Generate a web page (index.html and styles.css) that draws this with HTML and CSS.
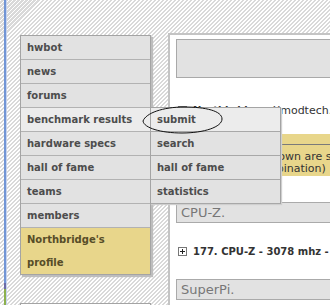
FILE: index.html
```html
<!DOCTYPE html>
<html lang="en">
<head>
<meta charset="UTF-8" />
<title>hwbot - Northbridge</title>
<link rel="stylesheet" href="styles.css">
</head>
<body>
<div class="page">
  <div class="edge"></div>

  <!-- left menu -->
  <div class="side">
    <ul class="menu">
      <li>hwbot</li>
      <li>news</li>
      <li>forums</li>
      <li class="open">benchmark results
        <ul class="submenu">
          <li class="hover">submit</li>
          <li>search</li>
          <li>hall of fame</li>
          <li>statistics</li>
        </ul>
      </li>
      <li>hardware specs</li>
      <li>hall of fame</li>
      <li>teams</li>
      <li>members</li>
      <li class="profile">Northbridge's<br>profile</li>
    </ul>
    <div class="sidebox"></div>
  </div>

  <!-- content -->
  <div class="content">
    <div class="panel-head"></div>
    <div class="row">
      <svg class="plus" width="9" height="9" viewBox="0 0 9 9"><rect x="0.5" y="0.5" width="8" height="8" fill="#fff" stroke="#777"/><path d="M2 4.5h5M4.5 2v5" stroke="#222"/></svg>
      <span><b>Northbridge</b> - Xmodtech.be</span>
    </div>
    <div class="notice">
      <div class="notice-top"></div>
      <div class="notice-text">Only the results shown are sorted by points<br>(for hardware combination)</div>
    </div>
    <div class="sect">CPU-Z.</div>
    <div class="row">
      <svg class="plus" width="9" height="9" viewBox="0 0 9 9"><rect x="0.5" y="0.5" width="8" height="8" fill="#fff" stroke="#777"/><path d="M2 4.5h5M4.5 2v5" stroke="#222"/></svg>
      <span><b>177. CPU-Z - 3078 mhz - Northbridge</b></span>
    </div>
    <div class="sect">SuperPi.</div>
  </div>
</div>

<svg class="mark" width="330" height="305" viewBox="0 0 330 305">
  <path d="M143,121 C146,113 163,107 184,107 C206,107 222,111 222,119 C222,127 204,133 182,133 C161,133 144,128 143,121 Z" fill="none" stroke="#111" stroke-width="1"/>
</svg>
</body>
</html>
```

FILE: styles.css
```css
html, body {
  margin:0; padding:0;
  height:305px;
  overflow:hidden;
}
body {
  font-family: 'DejaVu Sans', Verdana, sans-serif;
  background: repeating-linear-gradient(135deg, #ffffff 0 1.4px, #d9d9d9 1.4px 2.83px);
  color:#333;
  position:relative;
}
.page {
  display:flex;
  height:305px;
}
.edge {
  flex-shrink:0;
  margin-left:4px;
  width:2px;
  border-right:1px solid #c6d3ee;
  background: linear-gradient(#7195d5 0 283px, #6b6aa6 283px 289px, #8cb04c 289px);
}

/* left menu */
.side {
  margin-left:13px;
  width:131px;
  flex-shrink:0;
}
.menu {
  list-style:none;
  margin:35px 0 0;
  padding:0;
  border:1px solid #a4a4a4;
  box-shadow: 2px 2px 1px #bdbdbd;
  background:#e2e2e2;
}
.menu li {
  height:23px;
  line-height:23px;
  padding-left:6px;
  border-bottom:1px solid #b2b2b2;
  font-size:10px;
  font-weight:bold;
  color:#4d4d4d;
  white-space:nowrap;
}
.menu li:last-child { border-bottom:none; }
.menu li.open {
  background:#ececec;
  position:relative;
}
.menu li.profile {
  height:46px;
  background:#e8d68b;
  color:#574d28;
}
.submenu {
  list-style:none;
  margin:0; padding:0;
  position:absolute;
  top:-1px;
  left:100%;
  width:129px;
  border:1px solid #a4a4a4;
  border-bottom:none;
  background:#e2e2e2;
  box-shadow: 1px 1px 1px #cfcfcf;
  z-index:2;
}
.submenu li {
  padding-left:6px;
  border-bottom:1px solid #a8a8a8;
}
.submenu li:last-child { border-bottom:1px solid #a8a8a8; }
.submenu li.hover { background:#ececec; }
.sidebox {
  margin-top:28px;
  height:40px;
  border:1px solid #a4a4a4;
  background:#fff;
}

/* content */
.content {
  flex:1;
  min-width:0;
  overflow:hidden;
  margin:33px 0 0 17px;
  padding:4px 0 0 6px;
  background:#fff;
  border-top:2px solid #c4c4c4;
  border-left:2px solid #c4c4c4;
}
.panel-head {
  height:37px;
  border:1px solid #a9a9a9;
  border-right:none;
  background:#e2e2e2;
}
.row {
  display:flex;
  align-items:center;
  gap:6px;
  height:16px;
  padding-left:2px;
  font-size:11px;
  white-space:nowrap;
}
.row b { font-size:10px; color:#333; }
.panel-head + .row { margin-top:24px; }
.sect + .row { margin-top:20px; }
.plus { flex-shrink:0; }
.notice {
  margin-top:16px;
  background:#e8d68b;
}
.notice-top {
  height:10px;
  border-bottom:1px solid #7a7a7a;
}
.notice-text {
  padding:6px 0 1px 0;
  margin-left:-1px;
  font-size:11px;
  line-height:12px;
  white-space:nowrap;
  color:#333;
}
.sect {
  margin-top:26px;
  height:19px;
  line-height:19px;
  padding-left:4px;
  border:1px solid #aaa;
  border-right:none;
  background:#e2e2e2;
  font-size:13px;
  color:#777;
}
.row + .sect { margin-top:20px; }

.mark {
  position:absolute;
  left:0; top:0;
  z-index:5;
  pointer-events:none;
}
```
